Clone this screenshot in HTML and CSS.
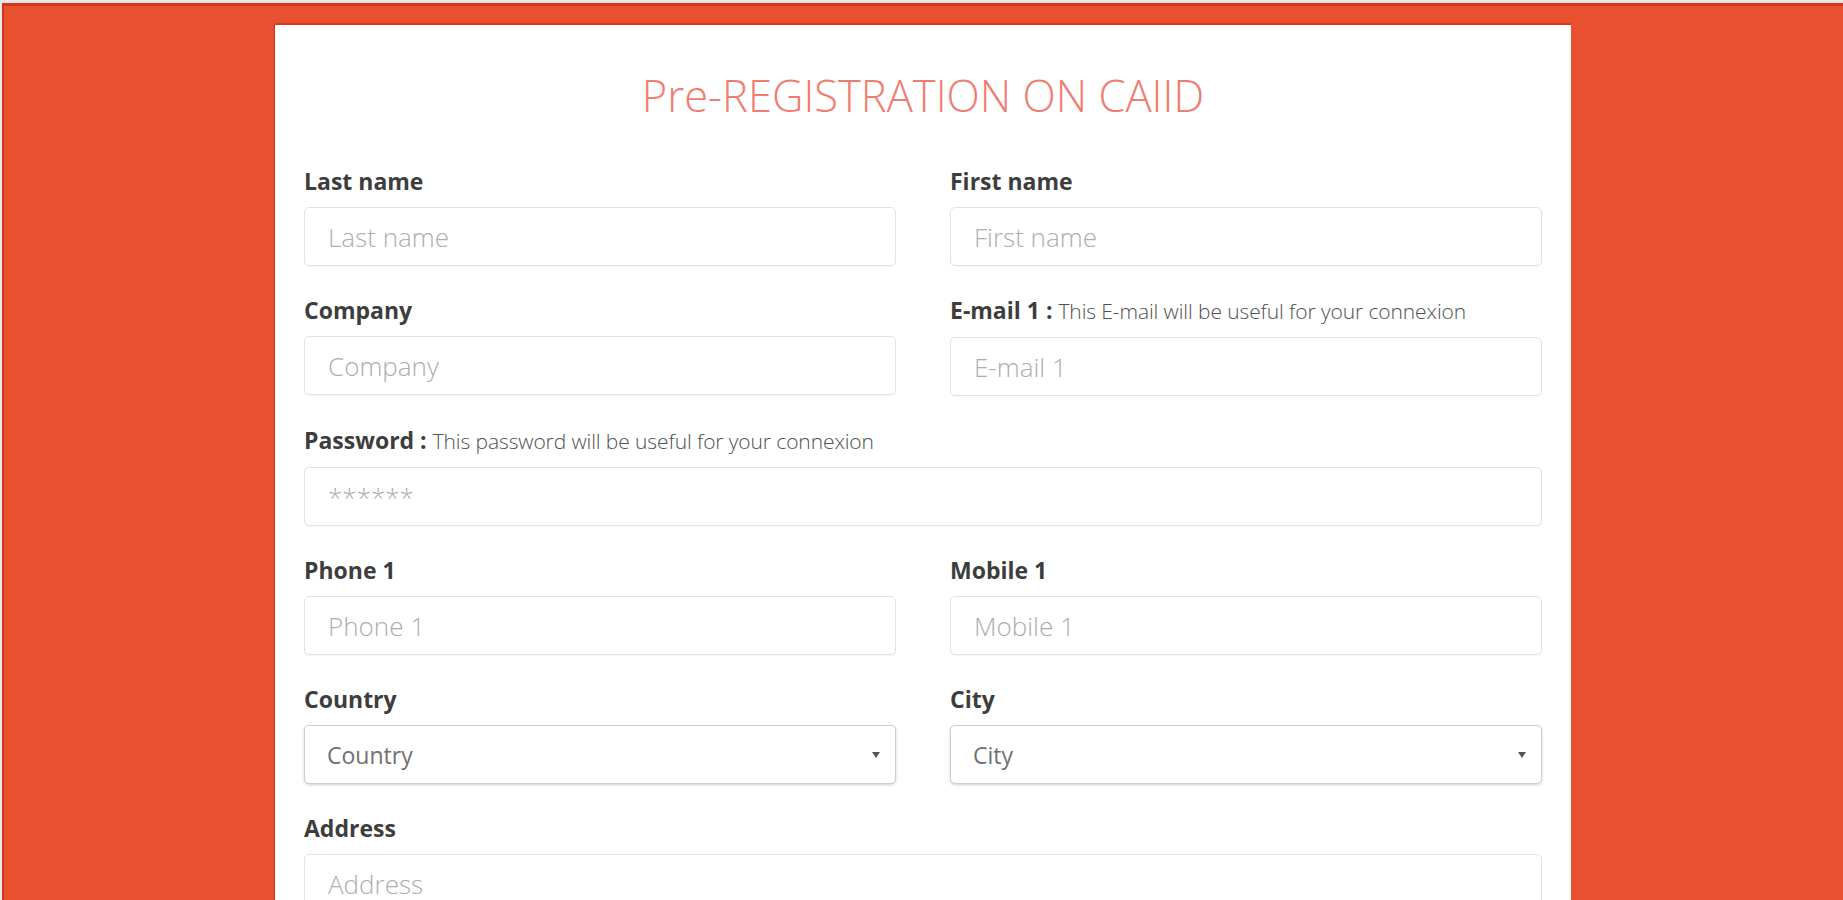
FILE: index.html
```html
<!DOCTYPE html>
<html lang="en">
<head>
<meta charset="utf-8">
<title>Pre-REGISTRATION ON CAIID</title>
<link rel="stylesheet" href="styles.css">
</head>
<body>
<div class="page">
  <main class="card">
    <h1 class="title">Pre-REGISTRATION ON CAIID</h1>
    <form class="form">
      <div class="field">
        <label class="label" for="lastname">Last name</label>
        <input class="control" id="lastname" type="text" placeholder="Last name">
      </div>
      <div class="field">
        <label class="label" for="firstname">First name</label>
        <input class="control" id="firstname" type="text" placeholder="First name">
      </div>
      <div class="field">
        <label class="label" for="company">Company</label>
        <input class="control" id="company" type="text" placeholder="Company">
      </div>
      <div class="field">
        <label class="label" for="email1">E-mail 1 : <span class="hint">This E-mail will be useful for your connexion</span></label>
        <input class="control" id="email1" type="text" placeholder="E-mail 1">
      </div>
      <div class="field wide">
        <label class="label" for="password">Password : <span class="hint">This password will be useful for your connexion</span></label>
        <input class="control" id="password" type="text" placeholder="******">
      </div>
      <div class="field">
        <label class="label" for="phone1">Phone 1</label>
        <input class="control" id="phone1" type="text" placeholder="Phone 1">
      </div>
      <div class="field">
        <label class="label" for="mobile1">Mobile 1</label>
        <input class="control" id="mobile1" type="text" placeholder="Mobile 1">
      </div>
      <div class="field">
        <label class="label" for="country">Country</label>
        <div class="select-wrap">
          <select class="control select" id="country"><option>Country</option></select>
        </div>
      </div>
      <div class="field">
        <label class="label" for="city">City</label>
        <div class="select-wrap">
          <select class="control select" id="city"><option>City</option></select>
        </div>
      </div>
      <div class="field wide">
        <label class="label" for="address">Address</label>
        <input class="control" id="address" type="text" placeholder="Address">
      </div>
    </form>
  </main>
</div>
</body>
</html>
```

FILE: styles.css
```css
html {
  background: #e9e9e9;
}

body {
  margin: 0;
  font-family: "Open Sans", "Liberation Sans", sans-serif;
}

.page {
  margin: 3px 0 0 2px;
  border-top: 3px solid #d8361a;
  border-left: 2px solid #d8361a;
  background: #e9502f;
  min-height: 1000px;
  overflow: hidden;
}

.card {
  width: 1296px;
  box-sizing: border-box;
  margin: 19px 0 0 271px;
  padding: 41px 29px 40px;
  background: #ffffff;
  box-shadow: 0 -2px 0 #da3a1c, -1px 0 1px rgba(180, 40, 10, 0.6);
}

.title {
  margin: 0;
  font-size: 43.5px;
  line-height: 60px;
  font-weight: 300;
  color: #ef7d6f;
  text-align: center;
}

.form {
  margin-top: 40px;
  display: grid;
  grid-template-columns: 1fr 1fr;
  column-gap: 54px;
  row-gap: 29px;
}

.field {
  display: flex;
  flex-direction: column;
  gap: 11px;
}

.wide {
  grid-column: 1 / span 2;
}

.label {
  font-size: 23px;
  line-height: 30px;
  font-weight: 700;
  color: #3d3d3d;
  white-space: nowrap;
}

.hint {
  font-size: 21px;
  font-weight: 300;
  color: #505050;
  letter-spacing: -0.1px;
}

.control {
  box-sizing: border-box;
  width: 100%;
  height: 59px;
  margin: 0;
  padding: 0 23px;
  border: 1px solid #e3e3e3;
  border-radius: 5px;
  background: #ffffff;
  font-family: "Open Sans", "Liberation Sans", sans-serif;
  font-size: 26px;
  font-weight: 300;
  color: #555555;
  box-shadow: 0 1px 2px rgba(0, 0, 0, 0.04);
  outline: none;
}

.control::placeholder {
  color: #adadad;
  opacity: 1;
}

.select-wrap {
  position: relative;
}

.select {
  appearance: none;
  -webkit-appearance: none;
  border-color: #cdcdcd;
  box-shadow: 0 1px 3px rgba(0, 0, 0, 0.18);
  font-size: 23px;
  font-weight: 400;
  color: #707070;
  padding-left: 22px;
}

.select-wrap::after {
  content: "";
  position: absolute;
  right: 16px;
  top: 27px;
  width: 0;
  height: 0;
  border-left: 4px solid transparent;
  border-right: 4px solid transparent;
  border-top: 6px solid #555555;
  pointer-events: none;
}
```
